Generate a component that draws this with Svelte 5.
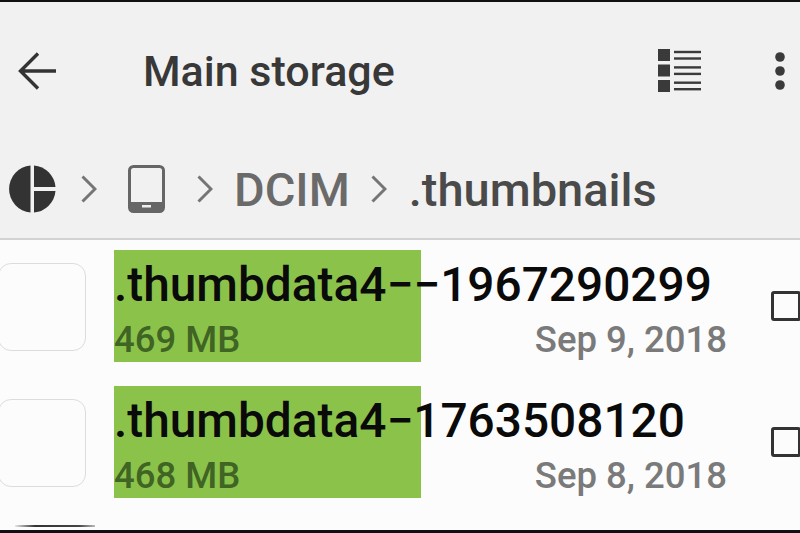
<script>
  const files = [
    { name: '.thumbdata4−−1967290299', size: '469 MB', date: 'Sep 9, 2018' },
    { name: '.thumbdata4−1763508120', size: '468 MB', date: 'Sep 8, 2018' }
  ];
</script>

<div class="screen">
  <header class="appbar">
    <svg class="back" viewBox="0 0 40 40" width="40" height="40" aria-hidden="true">
      <path d="M38 20H3M20 2.500 2.500 20 20 37.500" fill="none" stroke="#333" stroke-width="3.400"/>
    </svg>
    <h1>Main storage</h1>
    <svg class="listicon" viewBox="0 0 44 44" width="44" height="44" aria-hidden="true">
      <g fill="#3a3a3a">
        <rect x="0" y="0" width="12" height="12"/>
        <rect x="0" y="15.500" width="12" height="12"/>
        <rect x="0" y="31" width="12" height="12"/>
        <rect x="16" y="1.800" width="27" height="2.400"/>
        <rect x="16" y="8.300" width="27" height="2.400"/>
        <rect x="16" y="17.200" width="27" height="2.400"/>
        <rect x="16" y="23.700" width="27" height="2.400"/>
        <rect x="16" y="32.500" width="27" height="2.400"/>
        <rect x="16" y="39" width="27" height="2.400"/>
      </g>
    </svg>
    <svg class="more" viewBox="0 0 10 38" width="10" height="38" aria-hidden="true">
      <circle cx="5" cy="5" r="4.800" fill="#3a3a3a"/>
      <circle cx="5" cy="19" r="4.800" fill="#3a3a3a"/>
      <circle cx="5" cy="33" r="4.800" fill="#3a3a3a"/>
    </svg>
  </header>

  <nav class="crumbs">
    <svg class="disk" viewBox="0 0 48 48" width="48" height="48" aria-hidden="true">
      <path d="M22.500 0.500V47.500A23.600 23.600 0 0 1 22.500 0.500Z" fill="#333"/>
      <path d="M26 0.500A23.600 23.600 0 0 1 47.500 22H26Z" fill="#333"/>
      <path d="M26 26H47.500A23.600 23.600 0 0 1 26 47.500Z" fill="#333"/>
    </svg>
    <svg class="chev c1" viewBox="0 0 16 28" width="16" height="28" aria-hidden="true"><path d="M1.500 1.500 14 14 1.500 26.500" fill="none" stroke="#757575" stroke-width="3"/></svg>
    <svg class="phone" viewBox="0 0 38 48" width="38" height="48" aria-hidden="true">
      <rect x="1.500" y="1.500" width="34" height="45" rx="4" fill="none" stroke="#666" stroke-width="3"/>
      <path d="M1.500 37H35.500V43a3.500 3.500 0 0 1-3.500 3.500H5A3.500 3.500 0 0 1 1.500 43Z" fill="#666"/>
      <rect x="14" y="40" width="9" height="2.500" fill="#eee"/>
    </svg>
    <svg class="chev c2" viewBox="0 0 16 28" width="16" height="28" aria-hidden="true"><path d="M1.500 1.500 14 14 1.500 26.500" fill="none" stroke="#757575" stroke-width="3"/></svg>
    <span class="crumb dcim">DCIM</span>
    <svg class="chev c3" viewBox="0 0 16 28" width="16" height="28" aria-hidden="true"><path d="M1.500 1.500 14 14 1.500 26.500" fill="none" stroke="#757575" stroke-width="3"/></svg>
    <span class="crumb current">.thumbnails</span>
  </nav>

  <ul class="list">
    {#each files as f}
      <li class="row">
        <div class="thumb"></div>
        <div class="body">
          <div class="mark"></div>
          <div class="name">{f.name}</div>
          <div class="meta"><span class="size">{f.size}</span><span class="date">{f.date}</span></div>
        </div>
        <div class="check"></div>
      </li>
    {/each}
    <li class="peek"></li>
  </ul>
</div>

<style>
  :global(body) { margin: 0; background: #fcfcfc; }
  .screen {
    width: 800px; height: 533px; overflow: hidden; box-sizing: border-box;
    border-top: 2px solid #111; border-bottom: 3px solid #111;
    background: #fcfcfc;
    font-family: Roboto, "Liberation Sans", sans-serif;
    display: flex; flex-direction: column;
  }
  .appbar {
    height: 138px; flex: none; box-sizing: border-box; background: #f1f1f1;
    display: flex; align-items: center; padding: 0 15px 0 18px;
  }
  .back { flex: none; }
  h1 {
    margin: 0 0 0 85px; flex: 1; font-size: 43px; font-weight: 500; color: #383838; line-height: 1;
  }
  .listicon { flex: none; margin-right: 73px; }
  .more { flex: none; }
  .crumbs {
    height: 100px; flex: none; box-sizing: border-box; background: #f1f1f1;
    border-bottom: 2px solid #d2d2d2;
    display: flex; align-items: center; padding: 0 0 0 8px;
  }
  .chev { flex: none; }
  .c1 { margin: 0 31px 0 25px; }
  .c2 { margin: 0 21px 0 31px; }
  .c3 { margin: 0 22px 0 21px; }
  .crumb { font-size: 47px; font-weight: 500; line-height: 1; }
  .dcim { color: #6a6a6a; }
  .current { color: #4a4a4a; }
  .list { list-style: none; margin: 0; padding: 0; }
  .row {
    height: 135.500px; display: flex; align-items: flex-start; padding-top: 10px; box-sizing: border-box;
  }
  .thumb {
    flex: none; width: 88px; height: 88px; margin: 13px 0 0 -2px; box-sizing: border-box;
    border: 1.500px solid #dcdcdc; border-radius: 13px;
  }
  .body { position: relative; width: 613px; margin-left: 28px; flex: none; }
  .mark { position: absolute; left: 0; top: 0; width: 307px; height: 112px; background: #8bc34a; }
  .name {
    position: relative; font-size: 47.800px; font-weight: 500; color: #0a0a0a; line-height: 50px; padding-top: 10px; white-space: nowrap;
  }
  .meta {
    position: relative; display: flex; justify-content: space-between; font-size: 36.500px; font-weight: 500; line-height: 42px; margin-top: 9px;
  }
  .size { color: #3f6424; }
  .date { color: #7a7a7a; }
  .check {
    flex: none; width: 30px; height: 30px; box-sizing: border-box; border: 3px solid #333; border-radius: 3px; margin: 41px 0 0 44px;
  }
  .peek {
    width: 80px; height: 2px; margin: 14px 0 0 15px;
    background: linear-gradient(90deg, #e8e8e8, #333 25%, #444 80%, #bbb);
  }
</style>
